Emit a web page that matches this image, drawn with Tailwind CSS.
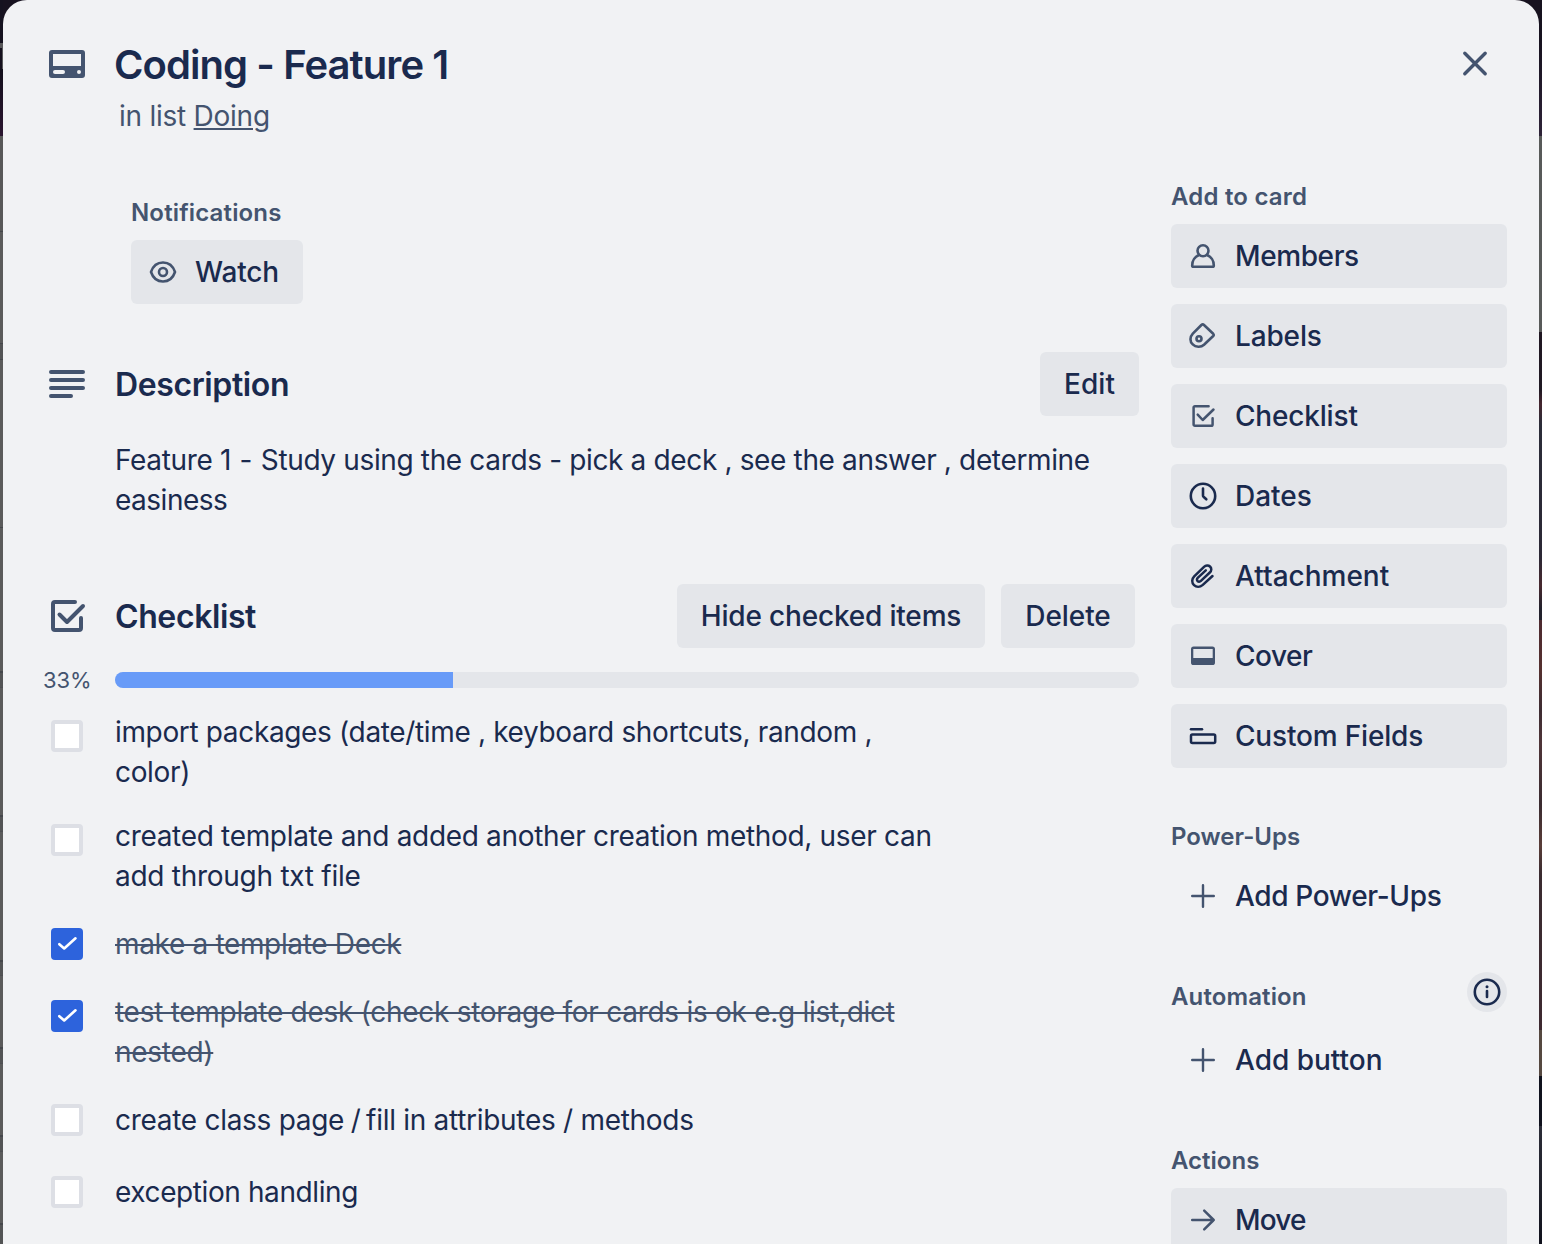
<!DOCTYPE html>
<html lang="en">
<head>
<meta charset="utf-8">
<title>Coding - Feature 1</title>
<script src="https://cdn.jsdelivr.net/npm/@tailwindcss/browser@4"></script>
</head>
<body class="relative h-[1244px] w-[1542px] overflow-hidden bg-[#17121f] font-['Inter',sans-serif] text-[28px] leading-10 text-[#1a2a4e]">

<!-- Dimmed board behind the dialog -->
<div class="absolute inset-y-0 left-0 flex w-[3px] flex-col">
  <div class="h-[43px] bg-[#15121f]"></div>
  <div class="h-[5px] bg-[#58585a]"></div>
  <div class="h-[21px] border-r border-[#58585a] bg-[#15101d]"></div>
  <div class="h-[67px] bg-linear-to-b from-[#130f1c] to-[#2b1630]"></div>
  <div class="h-[95px] bg-[#585858]"></div>
  <div class="h-[113px] border-y border-[#45474b] bg-[#5b5b5b]"></div>
  <div class="h-[15px] bg-[#535455]"></div>
  <div class="h-[169px] border-y border-[#45474b] bg-[#5b5b5b]"></div>
  <div class="h-[145px] border-b-2 border-[#45474b] bg-[#5b5b5b]"></div>
  <div class="h-[14px] bg-[#535455]"></div>
  <div class="h-[130px] border-t border-b-2 border-t-[#4e4f52] border-b-[#45474b] bg-[#5b5b5b]"></div>
  <div class="h-[14px] bg-[#535455]"></div>
  <div class="h-[131px] border-t border-b-2 border-t-[#4e4f52] border-b-[#45474b] bg-[#5b5b5b]"></div>
  <div class="h-[13px] bg-[#535455]"></div>
  <div class="h-[74px] border-t border-b-2 border-t-[#4e4f52] border-b-[#45474b] bg-[#5b5b5b]"></div>
  <div class="h-[14px] bg-[#535455]"></div>
  <div class="h-[74px] border-t border-b-2 border-t-[#4e4f52] border-b-[#45474b] bg-[#5b5b5b]"></div>
  <div class="h-[14px] bg-[#535455]"></div>
  <div class="h-[74px] border-t border-b-2 border-t-[#4e4f52] border-b-[#45474b] bg-[#5b5b5b]"></div>
  <div class="flex-1 bg-[#535455]"></div>
</div>
<div class="absolute inset-y-0 right-0 flex w-[3px] flex-col">
  <div class="h-[136px] bg-linear-to-b from-[#17121f] from-30% to-[#2e2338]"></div>
  <div class="h-[196px] bg-[#585a59]"></div>
  <div class="h-[288px] bg-[linear-gradient(to_bottom,#201722_0%,#1f1923_20%,#45262f_25%,#2b2c38_32%,#2b2835_78%,#47292f_88%,#22212c_96%)]"></div>
  <div class="h-[410px] bg-[linear-gradient(to_bottom,#4d2a30_0%,#55302f_12%,#3d2c32_22%,#4f3538_30%,#3a2b30_45%,#593d38_55%,#3a2b30_62%,#3d2930_100%)]"></div>
  <div class="h-[46px] bg-[#554840]"></div>
  <div class="h-[50px] bg-[#10121d]"></div>
  <div class="flex-1 bg-linear-to-b from-[#2b2c37] via-[#20212b] to-[#10111c]"></div>
</div>

<main class="relative mx-[3px] h-[1244px] overflow-hidden rounded-t-[24px] bg-[#f1f2f4]">
  <!-- Header -->
  <header class="flex h-[188px] items-start pt-10 pr-10 pl-10">
    <svg class="size-12" viewBox="0 0 48 48" fill="#44546f"><path fill-rule="evenodd" d="M9 10h30a3 3 0 0 1 3 3v22a3 3 0 0 1-3 3H9a3 3 0 0 1-3-3V13a3 3 0 0 1 3-3zM10 14v12h28V14zM12 30a2 2 0 0 0 0 4h8a2 2 0 0 0 0-4zM36 30a2 2 0 1 0 0 4 2 2 0 0 0 0-4z"/></svg>
    <div class="ml-6 flex-1">
      <h1 class="-ml-px h-12 pt-px text-[40px] leading-12 font-semibold tracking-[-0.93px]">Coding - Feature 1</h1>
      <p class="mt-2 ml-1 tracking-[-0.25px] text-[#44546f]">in list <a class="underline decoration-2 underline-offset-2">Doing</a></p>
    </div>
    <svg class="size-12" viewBox="0 0 48 48" fill="none" stroke="#44546f" stroke-width="3.4" stroke-linecap="round"><path d="M13.8 13.3l20.4 20.4M34.2 13.3L13.8 33.7"/></svg>
  </header>

  <div class="flex items-start">
    <!-- Card details -->
    <div class="w-[1136px] pl-10">
      <section class="mt-1 ml-[88px]">
        <h3 class="h-10 pt-px text-2xl leading-10 font-semibold tracking-[0.15px] text-[#44546f]">Notifications</h3>
        <button class="mt-2 flex h-16 w-[172px] items-center gap-4 rounded-md bg-[#e4e6ea] pl-4 font-medium tracking-[-0.15px]">
          <svg class="size-8" viewBox="0 0 32 32" fill="none" stroke="#44546f" stroke-width="2.6" stroke-linejoin="round"><path d="M4 16C6 10 10.5 6.500 16 6.500S26 10 28 16C26 22 21.500 25.500 16 25.500S6 22 4 16z"/><circle cx="16" cy="16" r="4"/></svg>
          Watch
        </button>
      </section>

      <section class="mt-12">
        <div class="flex h-16 items-center">
          <svg class="size-12" viewBox="0 0 48 48" fill="none" stroke="#44546f" stroke-width="4" stroke-linecap="round"><path d="M8 12h32M8 20h32M8 28h32M8 36h20"/></svg>
          <h2 class="ml-6 flex-1 pt-px text-[32px] font-semibold tracking-[-0.38px]">Description</h2>
          <button class="h-16 w-[99px] rounded-md bg-[#e4e6ea] font-medium tracking-[0.1px]">Edit</button>
        </div>
        <p class="mt-6 ml-[72px] tracking-[-0.35px] whitespace-nowrap"><span class="block">Feature <span class="tracking-[0.2px]">1 - </span>Study using the cards - pick a deck , see the answer , determine</span><span class="block tracking-[-0.5px]">easiness</span></p>
      </section>

      <section class="mt-16">
        <div class="flex h-16 items-center pr-1">
          <svg class="size-12" viewBox="0 0 48 48" fill="none" stroke="#44546f" stroke-width="4" stroke-linecap="round" stroke-linejoin="round"><path d="M32 10H12a2 2 0 0 0-2 2v24a2 2 0 0 0 2 2h24a2 2 0 0 0 2-2V26"/><path d="M16.500 22.500L24 30 40 14"/></svg>
          <h2 class="ml-6 flex-1 pt-px text-[32px] font-semibold tracking-[-0.4px]">Checklist</h2>
          <button class="mr-4 h-16 w-[308px] rounded-md bg-[#e4e6ea] font-medium tracking-[-0.18px]">Hide checked items</button>
          <button class="h-16 w-[134px] rounded-md bg-[#e4e6ea] font-medium tracking-[-0.08px]">Delete</button>
        </div>
        <div class="mt-4 flex h-8 items-center">
          <span class="w-[72px] text-[22px] tracking-[-0.09px] text-[#44546f]">33%</span>
          <div class="h-4 flex-1 overflow-hidden rounded-full bg-[#e4e6ea]"><div class="h-4 bg-[#689bf8]" style="width:33%"></div></div>
        </div>
        <ul class="mt-4 ml-2 flex flex-col gap-6 whitespace-nowrap">
          <li class="flex gap-8"><span class="mt-2 size-8 rounded-[4px] border-4 border-[#dddfe5] bg-white"></span><p class="tracking-[-0.35px]">import packages (date/time , keyboard shortcuts, random ,<br>color)</p></li>
          <li class="flex gap-8"><span class="mt-2 size-8 rounded-[4px] border-4 border-[#dddfe5] bg-white"></span><p class="tracking-[-0.32px]">created template and added another creation method, user can<br><span class="tracking-[-0.27px]">add through txt file</span></p></li>
          <li class="flex h-12 items-center gap-8"><span class="mt-2 size-8 self-start rounded-[4px] bg-[#2d63dc]"><svg class="size-8" viewBox="0 0 32 32" fill="none" stroke="white" stroke-width="2.600" stroke-linecap="round" stroke-linejoin="round"><path d="M8.300 16.200L13.200 20.500 24.500 10.300"/></svg></span><p class="tracking-[-0.34px] text-[#44546f] line-through decoration-2">make a template Deck</p></li>
          <li class="flex gap-8"><span class="mt-2 size-8 rounded-[4px] bg-[#2d63dc]"><svg class="size-8" viewBox="0 0 32 32" fill="none" stroke="white" stroke-width="2.600" stroke-linecap="round" stroke-linejoin="round"><path d="M8.300 16.200L13.200 20.500 24.500 10.300"/></svg></span><p class="tracking-[-0.28px] text-[#44546f] line-through decoration-2">test template desk (check storage for cards is ok e.g list,dict<br>nested)</p></li>
          <li class="flex h-12 items-center gap-8"><span class="mt-2 size-8 self-start rounded-[4px] border-4 border-[#dddfe5] bg-white"></span><p class="tracking-[-0.29px]">create class page<span class="tracking-[-1.3px]"> / </span>fill in attributes / methods</p></li>
          <li class="flex h-12 items-center gap-8"><span class="mt-2 size-8 self-start rounded-[4px] border-4 border-[#dddfe5] bg-white"></span><p class="tracking-[-0.4px]">exception handling</p></li>
        </ul>
      </section>
    </div>

    <!-- Sidebar -->
    <aside class="-mt-3 ml-8 w-[336px] font-medium">
      <h3 class="h-10 pt-px text-2xl leading-10 font-semibold tracking-[0.2px] text-[#44546f]">Add to card</h3>
      <div class="mt-2 flex flex-col gap-4">
        <button class="flex h-16 items-center gap-4 rounded-md bg-[#e4e6ea] pl-4 tracking-[-0.4px]">
          <svg class="size-8" viewBox="0 0 32 32" fill="none" stroke="#44546f" stroke-width="2.600" stroke-linejoin="round"><circle cx="16" cy="10.700" r="5.500"/><path d="M12 15C8 16.600 5.200 20.800 5.200 25.400q0 1.300 1.300 1.300H25.500q1.300 0 1.300-1.300C26.800 20.800 24 16.600 20 15"/></svg>
          Members</button>
        <button class="flex h-16 items-center gap-4 rounded-md bg-[#e4e6ea] pl-4 tracking-[-0.15px]">
          <svg class="size-8" viewBox="0 0 32 32" fill="none" stroke="#44546f" stroke-width="2.600" stroke-linejoin="round"><path d="M14.400 5L5.800 13.600C2.700 17 2.700 21.500 5.700 24.300C8.700 27.300 14 27.500 17 24.800L26.200 16q1.100-1.100 0-2.200L17 5q-1.300-1.200-2.600 0z"/><circle cx="12" cy="18.700" r="2.500"/></svg>
          Labels</button>
        <button class="flex h-16 items-center gap-4 rounded-md bg-[#e4e6ea] pl-4 tracking-[-0.18px]">
          <svg class="size-8" viewBox="0 0 32 32" fill="none" stroke="#44546f" stroke-width="2.500" stroke-linecap="round" stroke-linejoin="round"><path d="M21.600 6.300H7.900a1.300 1.300 0 0 0-1.300 1.300v16.800a1.300 1.300 0 0 0 1.300 1.300h16.400a1.300 1.300 0 0 0 1.300-1.300V18.200"/><path d="M10.700 14.700L15.700 20 26.500 9.500"/></svg>
          Checklist</button>
        <button class="flex h-16 items-center gap-4 rounded-md bg-[#e4e6ea] pl-4">
          <svg class="size-8" viewBox="0 0 32 32" fill="none" stroke="#1a2a4e" stroke-width="2.600" stroke-linecap="round" stroke-linejoin="round"><circle cx="16" cy="16" r="12.200"/><path d="M16 8.500V15.500Q16 16.200 16.500 16.700L19.300 19.300"/></svg>
          Dates</button>
        <button class="flex h-16 items-center gap-4 rounded-md bg-[#e4e6ea] pl-4">
          <svg class="size-8" viewBox="0 0 32 32" fill="none" stroke="#1a2a4e" stroke-width="2.500" stroke-linecap="round" stroke-linejoin="round"><path d="M25.500 16L15.800 24.900C12.800 27.500 9.300 27.300 7 25.100C4.600 22.800 4.600 19 7.200 16.400L17 6.900C18.800 5.100 21.400 4.900 23 6.500C24.800 8.200 24.700 10.700 22.800 12.500L13.900 20.900C12.900 21.900 11.400 21.900 10.600 21.100C9.700 20.200 9.700 18.900 10.700 17.900L18.800 10.300"/></svg>
          Attachment</button>
        <button class="flex h-16 items-center gap-4 rounded-md bg-[#e4e6ea] pl-4 tracking-[-0.5px]">
          <svg class="size-8" viewBox="0 0 32 32" fill="#44546f"><path fill-rule="evenodd" d="M6.600 6.500h18.800a2.600 2.600 0 0 1 2.600 2.600v13.400a2.600 2.600 0 0 1-2.600 2.600H6.600A2.600 2.600 0 0 1 4 22.500V9.100a2.600 2.600 0 0 1 2.600-2.600zM6.300 9.100v8.900h19.400V9.100z"/></svg>
          Cover</button>
        <button class="flex h-16 items-center gap-4 rounded-md bg-[#e4e6ea] pl-4 tracking-[-0.18px]">
          <svg class="size-8" viewBox="0 0 32 32" fill="none" stroke="#1a2a4e" stroke-width="2.500" stroke-linecap="round"><path d="M4 9.200h11"/><rect x="4" y="14.500" width="24.200" height="8.400" rx="1.400"/></svg>
          Custom Fields</button>
      </div>

      <h3 class="mt-12 h-10 pt-px text-2xl leading-10 font-semibold text-[#44546f]">Power-Ups</h3>
      <button class="mt-2 flex h-16 items-center gap-4 pl-4 tracking-[-0.35px]">
        <svg class="size-8" viewBox="0 0 32 32" fill="none" stroke="#44546f" stroke-width="2.400" stroke-linecap="round"><path d="M16 5.200v21.600M5.200 16h21.600"/></svg>
        Add Power-Ups</button>

      <div class="mt-11 flex h-10 items-start justify-between">
        <h3 class="mt-1 pt-px text-2xl leading-10 font-semibold tracking-[0.12px] text-[#44546f]">Automation</h3>
        <span class="size-10 rounded-full bg-[#e4e6ea] p-1"><svg class="size-8" viewBox="0 0 32 32" fill="none" stroke="#1a2a4e" stroke-width="2.600" stroke-linecap="round"><circle cx="16" cy="16" r="12.200"/><path d="M16 15v6"/><circle cx="16" cy="10.800" r="1.500" fill="#1a2a4e" stroke="none"/></svg></span>
      </div>
      <button class="mt-4 flex h-16 items-center gap-4 pl-4">
        <svg class="size-8" viewBox="0 0 32 32" fill="none" stroke="#44546f" stroke-width="2.400" stroke-linecap="round"><path d="M16 5.200v21.600M5.200 16h21.600"/></svg>
        Add button</button>

      <h3 class="mt-12 h-10 pt-px text-2xl leading-10 font-semibold text-[#44546f]">Actions</h3>
      <button class="mt-2 flex h-16 w-full items-center gap-4 rounded-md bg-[#e4e6ea] pl-4 tracking-[-0.8px]">
        <svg class="size-8" viewBox="0 0 32 32" fill="none" stroke="#44546f" stroke-width="2.500" stroke-linecap="round" stroke-linejoin="round"><path d="M5.200 16H26.700M17.200 6.600L26.700 16 17.200 25.400"/></svg>
        Move</button>
    </aside>
  </div>
</main>
</body>
</html>
